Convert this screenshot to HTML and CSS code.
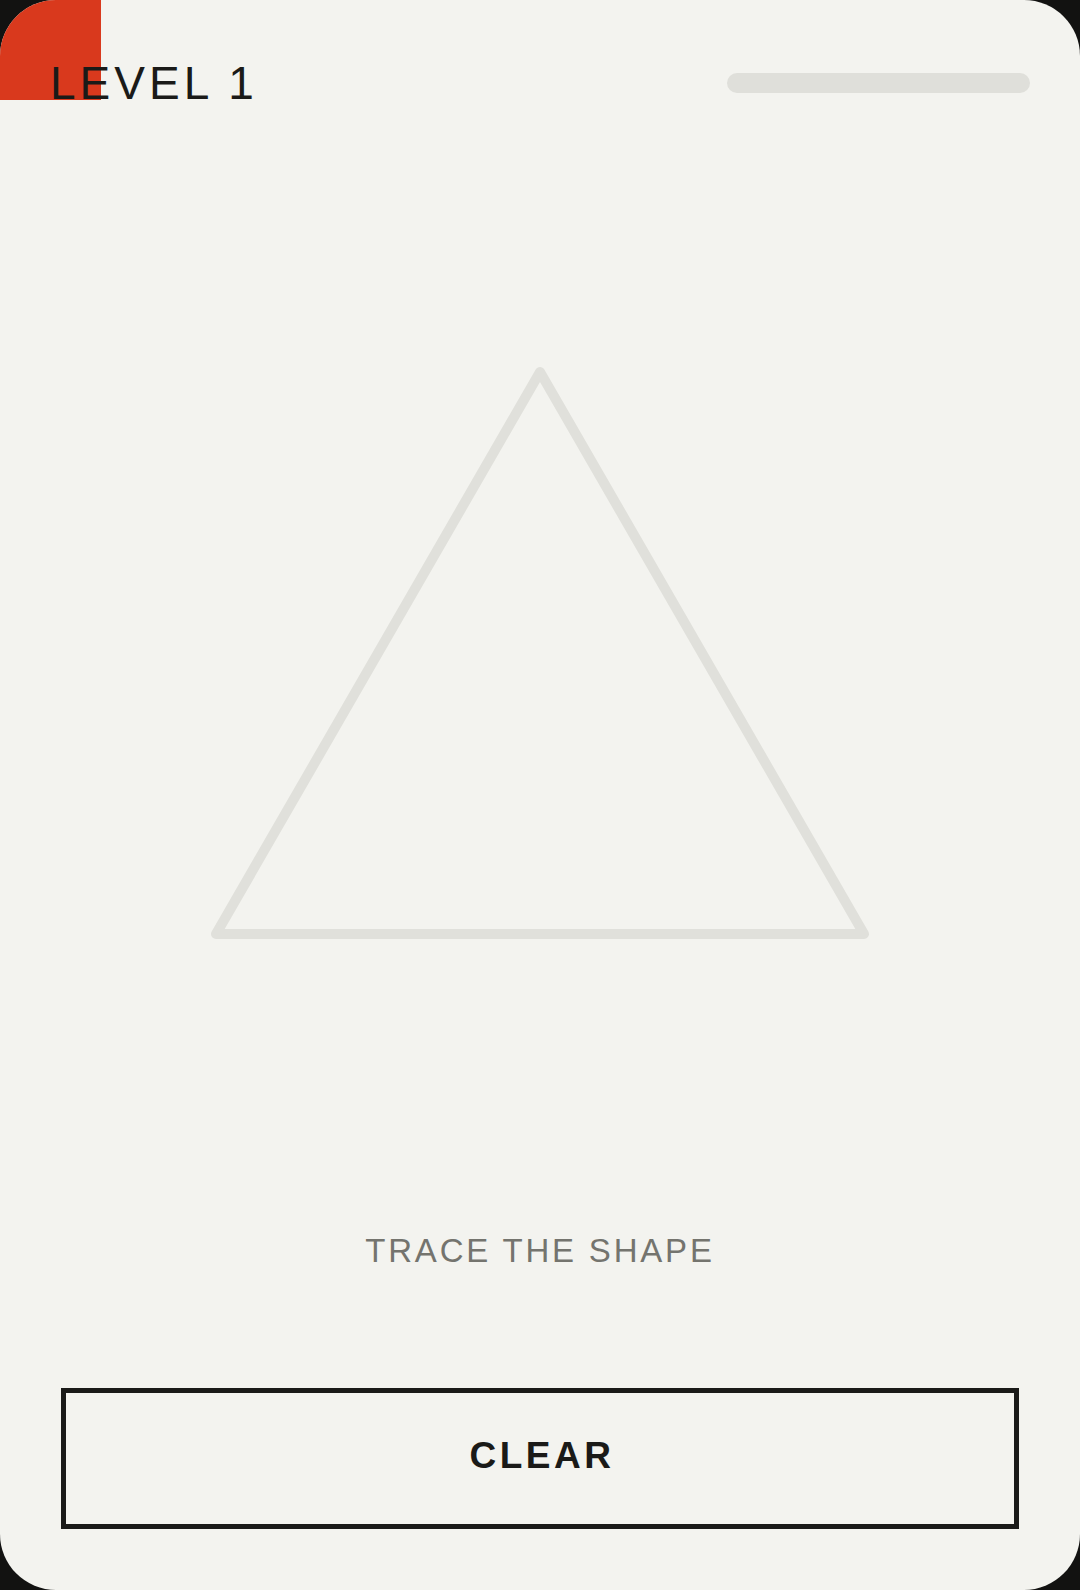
FILE: index.html
```html
<!DOCTYPE html>
<html lang="en">
<head>
<meta charset="utf-8">
<title>Level 1</title>
<link rel="stylesheet" href="styles.css">
</head>
<body>
<div class="card">
  <div class="corner"></div>
  <header class="header">
    <h1 class="level">LEVEL 1</h1>
    <div class="progress"><div class="progress-fill"></div></div>
  </header>
  <div class="stage">
    <svg class="shape" width="660" height="576" viewBox="210 366 660 576" xmlns="http://www.w3.org/2000/svg">
      <path d="M540 372 L864 934 L216 934 Z" fill="none" stroke="#e0e0db" stroke-width="10" stroke-linejoin="round" stroke-linecap="round"/>
    </svg>
  </div>
  <p class="hint">TRACE THE SHAPE</p>
  <button class="clear" type="button">CLEAR</button>
</div>
</body>
</html>
```
FILE: styles.css
```css
html, body {
  margin: 0;
  padding: 0;
  background: #121211;
}
.card {
  position: relative;
  width: 1080px;
  height: 1590px;
  background: #f3f3ef;
  border-radius: 56px;
  overflow: hidden;
  display: flex;
  flex-direction: column;
  font-family: "Liberation Sans", Arial, sans-serif;
}
.corner {
  position: absolute;
  left: 0;
  top: 0;
  width: 101px;
  height: 100px;
  background: #d9391d;
}
.header {
  position: relative;
  display: flex;
  align-items: center;
  justify-content: space-between;
  padding: 60px 50px 0 50px;
}
.level {
  margin: 0;
  font-size: 46px;
  line-height: 46px;
  font-weight: 400;
  letter-spacing: 4px;
  color: #1a1a18;
}
.progress {
  width: 303px;
  height: 20px;
  border-radius: 10px;
  background: #dfdfda;
}
.progress-fill {
  width: 0;
  height: 100%;
}
.stage {
  display: flex;
  justify-content: center;
  margin-top: 260px;
}
.shape {
  display: block;
}
.hint {
  margin: 292px 0 0 0;
  text-align: center;
  font-size: 33px;
  line-height: 33px;
  letter-spacing: 2.8px;
  color: #74746e;
}
.clear {
  margin: 121px 61px 0 61px;
  height: 141px;
  box-sizing: border-box;
  border: 5px solid #1a1a18;
  background: transparent;
  border-radius: 0;
  display: flex;
  align-items: center;
  justify-content: center;
  padding: 0 0 6px 4px;
  font-family: "Liberation Sans", Arial, sans-serif;
  font-weight: 700;
  font-size: 37px;
  line-height: 37px;
  letter-spacing: 3.5px;
  color: #1a1a18;
}
```
